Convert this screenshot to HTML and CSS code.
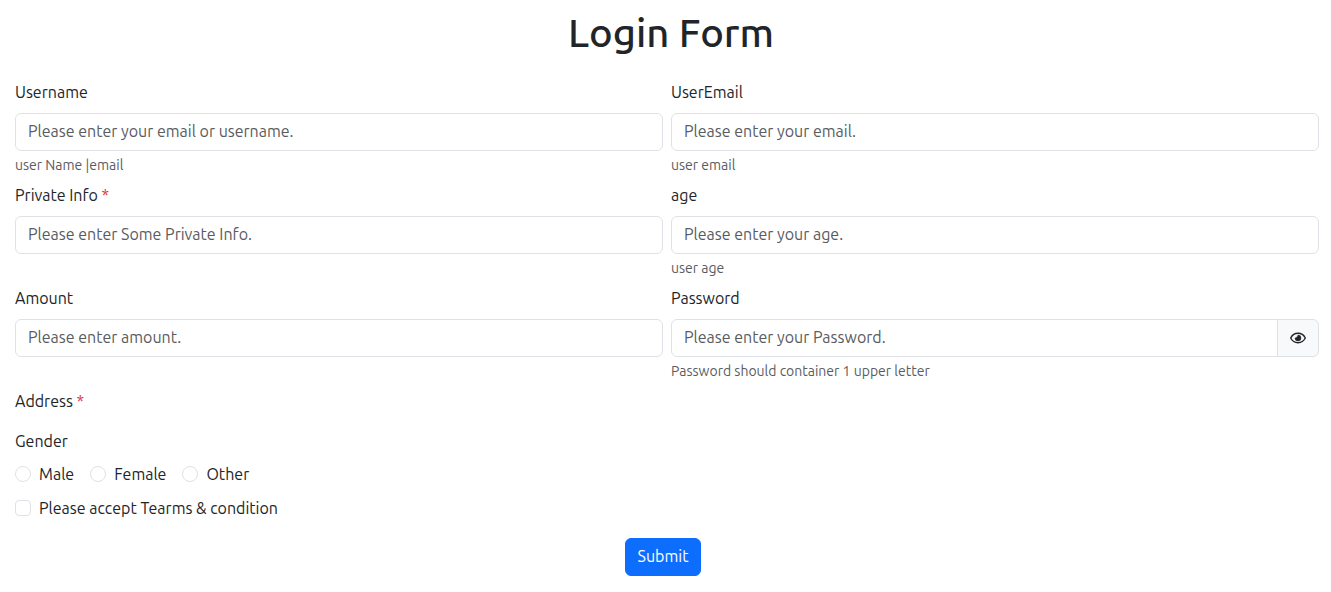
FILE: index.html
```html
<!DOCTYPE html>
<html lang="en">
<head>
<meta charset="utf-8">
<meta name="viewport" content="width=device-width, initial-scale=1">
<title>Login Form</title>
<link rel="stylesheet" href="styles.css">
</head>
<body>
<main class="page">
  <h1 class="title">Login Form</h1>
  <form class="form">
    <div class="grid">
      <div class="field">
        <label class="label" for="username">Username</label>
        <input class="control" id="username" type="text" placeholder="Please enter your email or username.">
        <small class="hint">user Name |email</small>
      </div>
      <div class="field">
        <label class="label" for="email">UserEmail</label>
        <input class="control" id="email" type="email" placeholder="Please enter your email.">
        <small class="hint">user email</small>
      </div>
      <div class="field">
        <label class="label" for="private">Private Info <span class="required">*</span></label>
        <input class="control" id="private" type="text" placeholder="Please enter Some Private Info.">
      </div>
      <div class="field">
        <label class="label" for="age">age</label>
        <input class="control" id="age" type="text" placeholder="Please enter your age.">
        <small class="hint">user age</small>
      </div>
      <div class="field">
        <label class="label" for="amount">Amount</label>
        <input class="control" id="amount" type="text" placeholder="Please enter amount.">
      </div>
      <div class="field">
        <label class="label" for="password">Password</label>
        <div class="group">
          <input class="control" id="password" type="password" placeholder="Please enter your Password.">
          <button class="reveal" type="button" aria-label="Show password">
            <svg class="eye" viewBox="0 0 16 16" aria-hidden="true">
              <path d="M.7 8C2.200 5 4.900 3.300 8 3.300S13.800 5 15.300 8C13.800 11 11.100 12.700 8 12.700S2.200 11 .7 8Z" fill="none" stroke="currentColor" stroke-width="1.400"/>
              <path d="M8 5A3 3 0 1 1 5 8C6.300 8 8 6.300 8 5Z" fill="currentColor" stroke="currentColor" stroke-width=".5"/>
            </svg>
          </button>
        </div>
        <small class="hint">Password should container 1 upper letter</small>
      </div>
    </div>
    <div class="address">Address <span class="required">*</span></div>
    <fieldset class="gender">
      <legend class="legend">Gender</legend>
      <div class="options">
        <label class="choice"><input class="radio" type="radio" name="gender">Male</label>
        <label class="choice"><input class="radio" type="radio" name="gender">Female</label>
        <label class="choice"><input class="radio" type="radio" name="gender">Other</label>
      </div>
    </fieldset>
    <label class="choice terms"><input class="check" type="checkbox">Please accept Tearms &amp; condition</label>
    <div class="actions"><button class="submit" type="submit">Submit</button></div>
  </form>
</main>
</body>
</html>
```
FILE: styles.css
```css
* { box-sizing: border-box; }

body {
  margin: 0;
  background: #fff;
  color: #212529;
  font: 16px/24px Ubuntu, "Noto Sans", sans-serif;
}

.page { padding: 9px 12px 16px 15px; }

.title {
  margin: 0 0 23px;
  padding-left: 8px;
  font-size: 40px;
  font-weight: 500;
  line-height: 48px;
  text-align: center;
}

.grid {
  display: grid;
  grid-template-columns: 1fr 1fr;
  gap: 8px;
}

.field { display: flex; flex-direction: column; align-items: flex-start; }

.label { margin-bottom: 9px; }

.required { color: #dc3545; }

.control {
  width: 100%;
  height: 38px;
  padding: 5px 12px 7px;
  border: 1px solid #dee2e6;
  border-radius: 6px;
  background: #fff;
  color: inherit;
  font: inherit;
}

.control::placeholder { color: #595c5f; opacity: 1; }

.hint {
  margin-top: 4px;
  color: #595c5f;
  font-size: 14px;
  line-height: 20px;
}

.group { display: flex; width: 100%; }

.group .control { flex: 1; border-radius: 6px 0 0 6px; }

.reveal {
  display: flex;
  align-items: center;
  justify-content: center;
  width: 42px;
  margin-left: -1px;
  padding: 0;
  border: 1px solid #dee2e6;
  border-radius: 0 6px 6px 0;
  background: #f8f9fa;
  color: #212529;
}

.eye { width: 16px; height: 16px; }

.address { margin: 8px 0 16px; }

.gender { margin: 0; padding: 0; border: 0; }

.legend { margin-bottom: 9px; padding: 0; }

.options { display: flex; gap: 16px; }

.choice { display: flex; align-items: center; gap: 8px; }

.terms { margin: 10px 0 18px; width: fit-content; }

.radio,
.check {
  width: 16px;
  height: 16px;
  margin: 0;
  border: 1px solid #dee2e6;
  background: #fff;
  appearance: none;
}

.radio { border-radius: 50%; }
.check { border-radius: 4px; }

.radio:checked,
.check:checked { border-color: #0d6efd; background: #0d6efd; }

.actions { display: flex; justify-content: center; padding-right: 8px; }

.submit {
  padding: 5px 12px 7px;
  border: 1px solid #0d6efd;
  border-radius: 6px;
  background: #0d6efd;
  color: #fff;
  font: inherit;
}
```
